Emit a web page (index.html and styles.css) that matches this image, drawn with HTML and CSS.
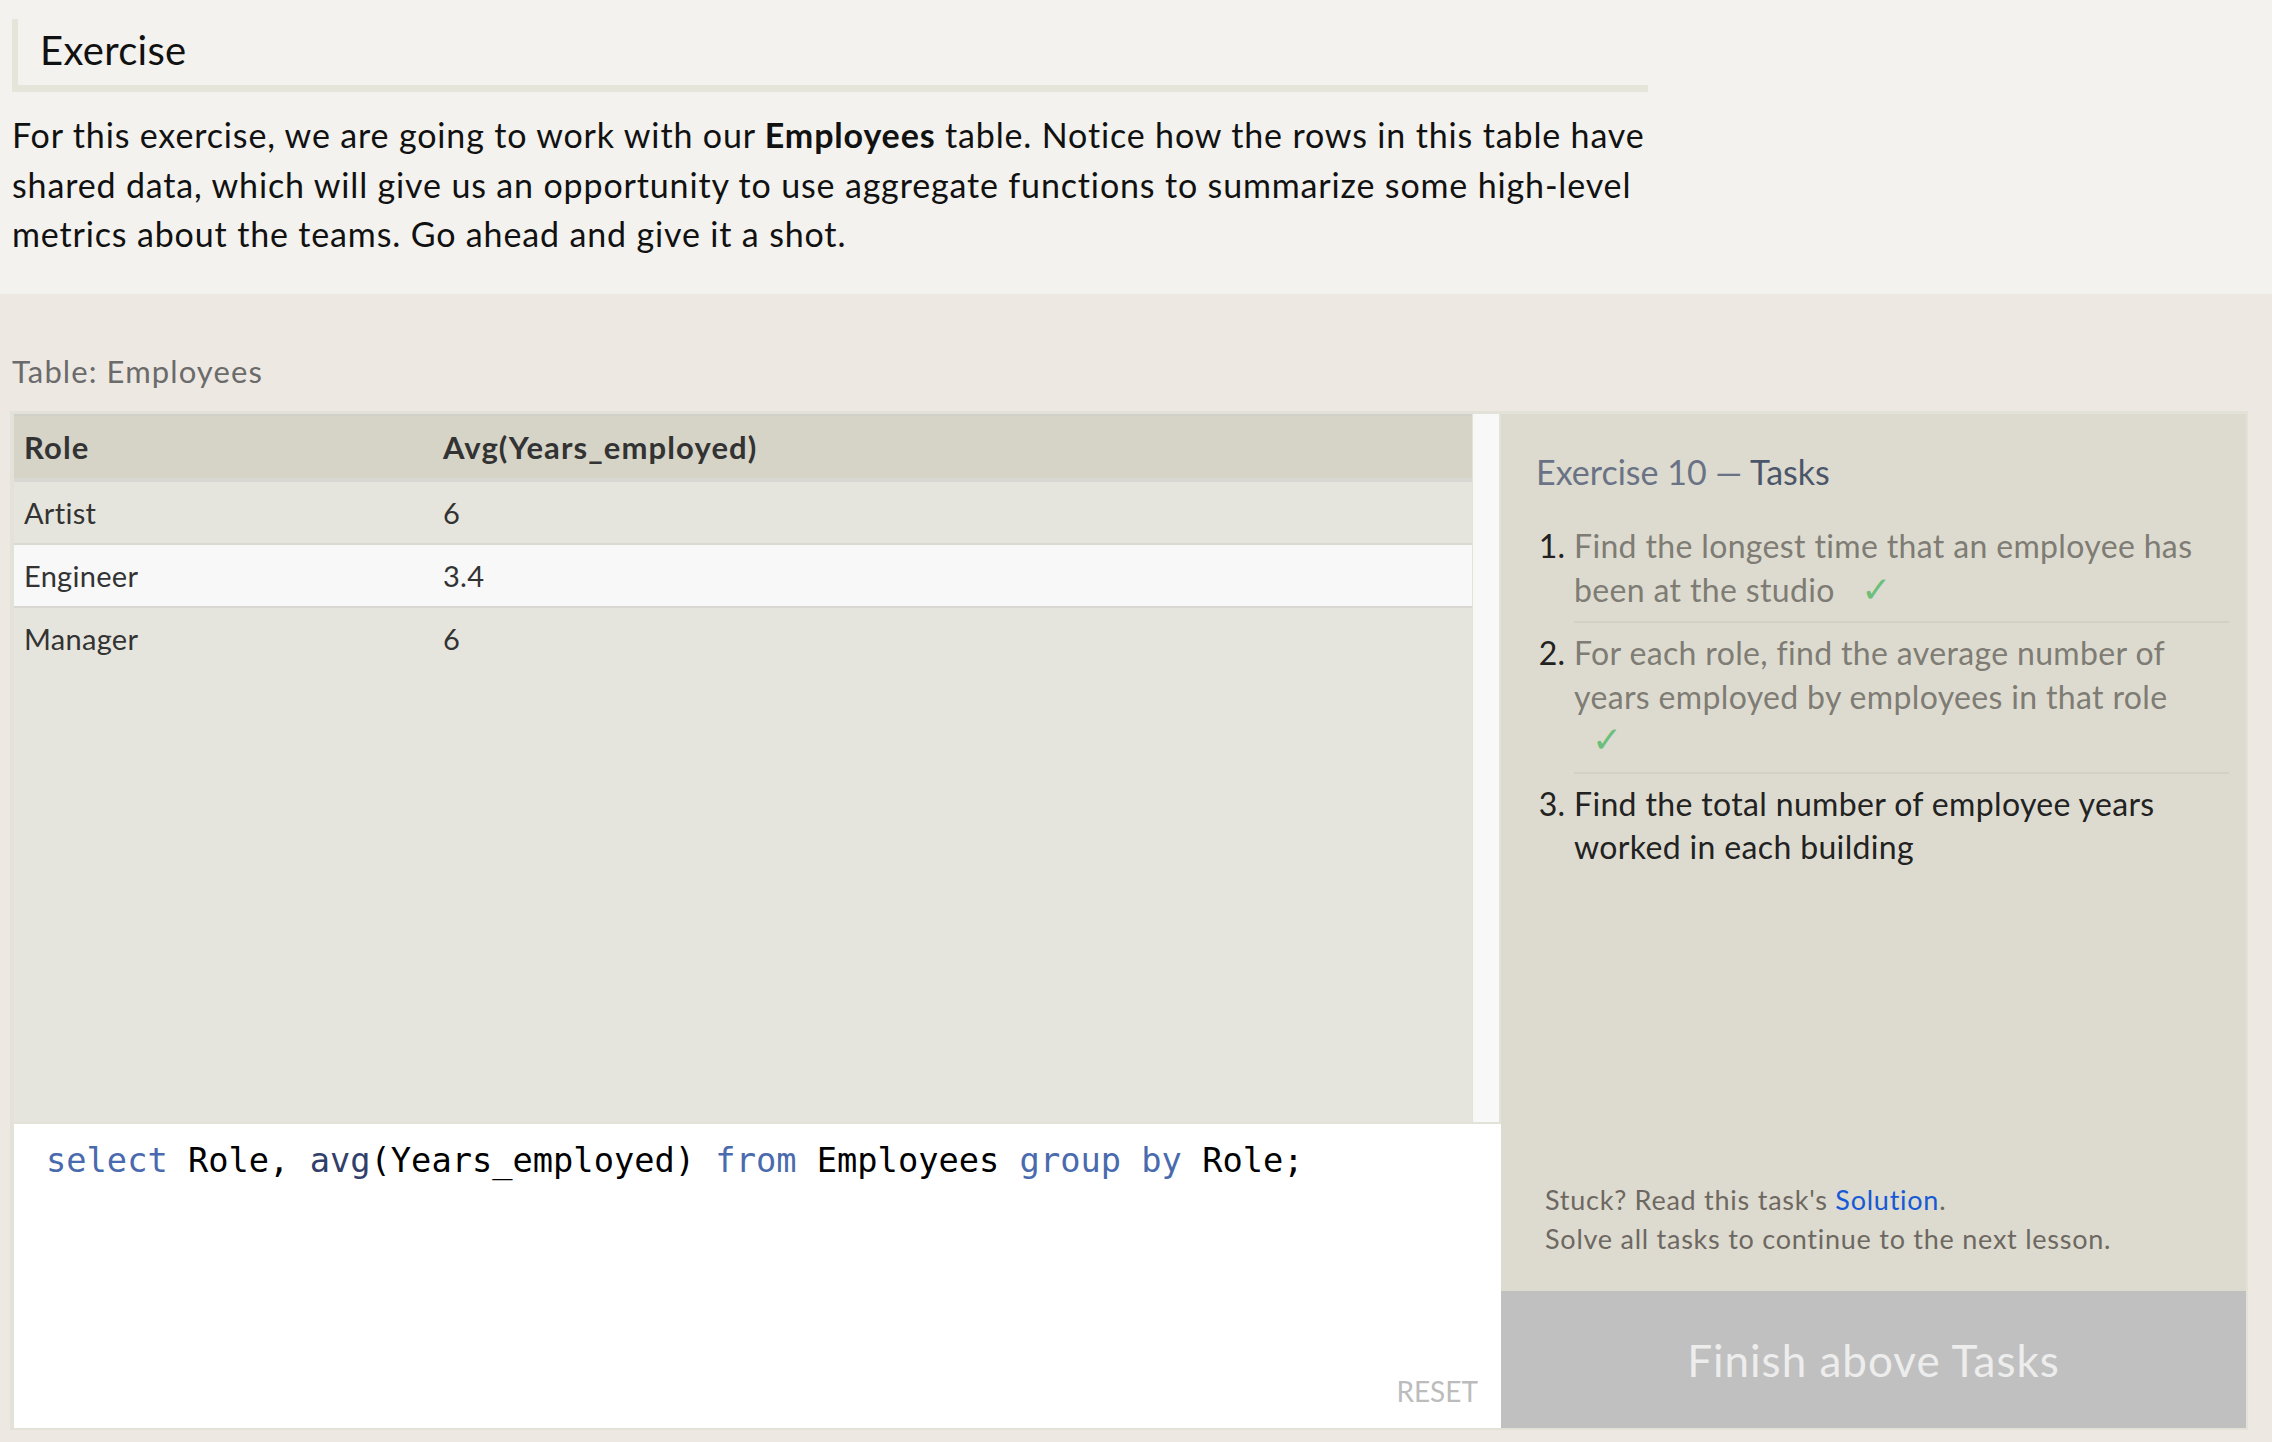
FILE: index.html
```html
<!DOCTYPE html>
<html lang="en">
<head>
<meta charset="utf-8">
<title>SQL Lesson — Exercise 10</title>
<link rel="stylesheet" href="styles.css">
</head>
<body>
  <section class="intro">
    <h1 class="heading">Exercise</h1>
    <p class="lead">For this exercise, we are going to work with our <strong>Employees</strong> table. Notice how the rows in this table have shared data, which will give us an opportunity to use aggregate functions to summarize some high-level metrics about the teams. Go ahead and give it a shot.</p>
  </section>

  <section class="workspace">
    <div class="table-label">Table: Employees</div>
    <div class="frame">
      <div class="left">
        <div class="results">
          <div class="results-scroll">
            <table class="grid">
              <colgroup><col class="c1"><col></colgroup>
              <thead>
                <tr><th>Role</th><th>Avg(Years_employed)</th></tr>
              </thead>
              <tbody>
                <tr><td>Artist</td><td>6</td></tr>
                <tr class="hover"><td>Engineer</td><td>3.4</td></tr>
                <tr class="last"><td>Manager</td><td>6</td></tr>
              </tbody>
            </table>
          </div>
          <div class="track"></div>
        </div>
        <div class="editor">
          <div class="code"><span class="kw">select</span> Role, <span class="fn">avg</span>(Years_employed) <span class="kw">from</span> Employees <span class="kw">group</span> <span class="kw">by</span> Role;</div>
          <div class="reset">RESET</div>
        </div>
      </div>
      <aside class="tasks">
        <h2 class="tasks-title">Exercise 10 — <span class="strong">Tasks</span></h2>
        <ol class="task-list">
          <li class="done">Find the longest time that an employee has been at the studio <span class="check">✓</span></li>
          <li class="done">For each role, find the average number of years employed by employees in that role <span class="check">✓</span></li>
          <li class="todo">Find the total number of employee years worked in each building</li>
        </ol>
        <div class="spacer"></div>
        <div class="help">
          <div>Stuck? Read this task's <a href="#" class="link">Solution</a>.</div>
          <div>Solve all tasks to continue to the next lesson.</div>
        </div>
        <div class="finish">Finish above Tasks</div>
      </aside>
    </div>
  </section>
</body>
</html>
```
FILE: styles.css
```css
html, body {
  margin: 0;
  padding: 0;
}
body {
  background: #ede9e2;
  font-family: Lato, "Open Sans", sans-serif;
  color: #111;
  width: 2272px;
  height: 1442px;
  overflow: hidden;
}

.intro {
  background: #f3f2ee;
  padding: 19px 12px 0 12px;
  height: 275px;
  box-sizing: content-box;
}
.heading {
  width: 1636px;
  box-sizing: border-box;
  margin: 0;
  height: 73px;
  border-left: 6px solid #e6e5da;
  border-bottom: 7px solid #e6e5da;
  padding-left: 22px;
  font-weight: normal;
  font-size: 40px;
  letter-spacing: 0.3px;
  line-height: 62px;
  color: #111;
}
.lead {
  width: 1670px;
  margin: 18px 0 0 0;
  font-size: 34px;
  letter-spacing: 0.85px;
  line-height: 49.5px;
  color: #111;
}
.lead strong {
  font-weight: bold;
}

.workspace {
  padding-top: 59px;
}
.table-label {
  margin-left: 12px;
  font-size: 31px;
  letter-spacing: 1.1px;
  line-height: 36px;
  color: #6b6b6b;
  margin-bottom: 22px;
}

.frame {
  margin-left: 10px;
  width: 2238px;
  box-sizing: border-box;
  background: #e3e2d9;
  padding: 3px 2px 2px 4px;
  display: grid;
  grid-template-columns: 1487px 745px;
  height: 1019px;
}

.left {
  display: flex;
  flex-direction: column;
  gap: 2px;
}
.results {
  height: 708px;
  display: flex;
  background: #e3e2d9;
}
.results-scroll {
  flex: 1;
  background: #e6e5dd;
  border-top: 2px solid #d2d1c9;
  box-sizing: border-box;
}
.track {
  width: 26px;
  margin: 0 2px 0 1px;
  background: #f8f8f8;
}

.grid {
  width: 100%;
  border-collapse: collapse;
  table-layout: fixed;
  color: #333;
}
.grid col.c1 {
  width: 419px;
}
.grid th {
  background: #d6d4c7;
  text-align: left;
  font-weight: bold;
  font-size: 31px;
  letter-spacing: 1.1px;
  height: 62px;
  padding: 0 0 0 10px;
  border-bottom: 4px solid #d9d8d2;
}
.grid td {
  height: 61px;
  padding: 0 0 0 10px;
  border-bottom: 2px solid #d9d8d2;
  font-size: 29px;
  letter-spacing: 0.3px;
}
.grid tr.last td {
  border-bottom: none;
}
.grid tr.hover td {
  background: #f8f8f8;
}

.editor {
  flex: 1;
  background: #fff;
  display: flex;
  flex-direction: column;
  padding: 16px 23px 20px 32px;
}
.code {
  font-family: "DejaVu Sans Mono", "Liberation Mono", monospace;
  font-size: 33.7px;
  line-height: 42px;
  color: #000;
  white-space: pre;
}
.code .kw {
  color: #4a6aae;
}
.code .fn {
  color: #333f6b;
}
.reset {
  margin-top: auto;
  align-self: flex-end;
  font-size: 28px;
  line-height: 34px;
  color: #bcbcbc;
}

.tasks {
  background: #dddbcf;
  display: flex;
  flex-direction: column;
}
.tasks-title {
  margin: 38px 0 0 35px;
  font-weight: normal;
  font-size: 34px;
  line-height: 40px;
  color: #6a7386;
}
.tasks-title .strong {
  color: #4c566a;
}
.task-list {
  margin: 24px 17px 0 0;
  padding-left: 73px;
  font-size: 32px;
  letter-spacing: 0.35px;
  line-height: 43.5px;
}
.task-list li {
  padding: 8px 0 10px 0;
  border-bottom: 2px solid #d3d1c5;
}
.task-list li:last-child {
  border-bottom: none;
}
.task-list li::marker {
  color: #222;
}
.task-list li.done {
  color: #7e7c74;
}
.task-list li.todo {
  color: #222;
}
.check {
  display: inline-block;
  margin-left: 18px;
  margin-right: 24px;
  color: #6cbf7b;
  font-family: "DejaVu Sans", sans-serif;
  font-size: 36px;
  line-height: 43px;
}
.spacer {
  flex: 1;
}
.help {
  padding-left: 44px;
  font-size: 27px;
  letter-spacing: 0.75px;
  line-height: 39px;
  color: #6e6862;
  margin-bottom: 33px;
}
.link {
  color: #1559d6;
  text-decoration: none;
}
.finish {
  height: 137px;
  background: #c0c0c0;
  color: #ededed;
  font-size: 44px;
  letter-spacing: 1px;
  display: flex;
  align-items: center;
  justify-content: center;
}
```
